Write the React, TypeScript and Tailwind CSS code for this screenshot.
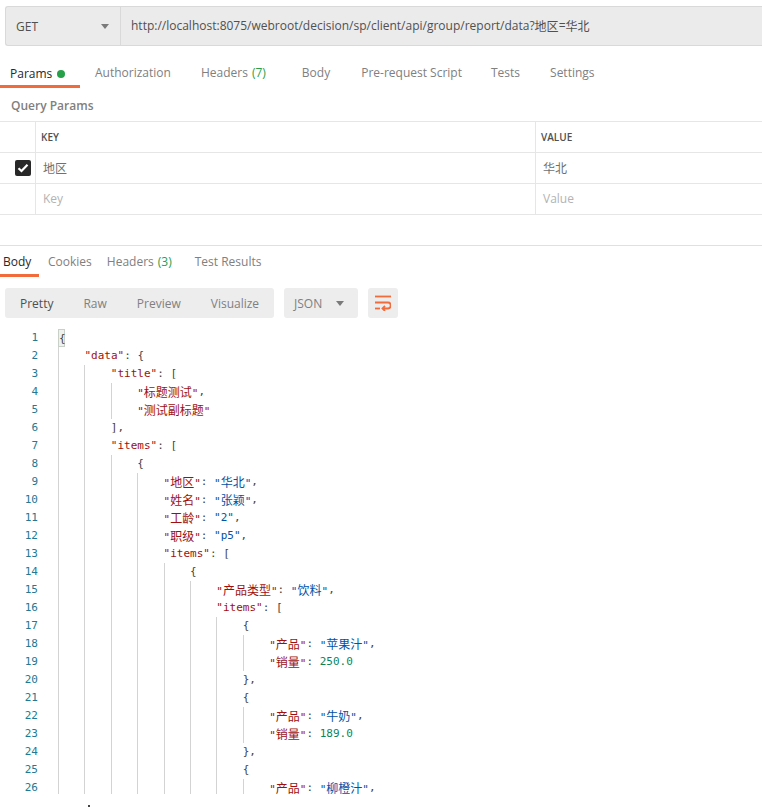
import React from "react";

type Tok = [string, "k" | "s" | "n" | "p"];
type Line = [number, Tok[]];

const k = (t: string): Tok => [t, "k"];
const s = (t: string): Tok => [t, "s"];
const n = (t: string): Tok => [t, "n"];
const p = (t: string): Tok => [t, "p"];

const lines: Line[] = [
  [0, [p("{")]],
  [1, [k('"data"'), p(": {")]],
  [2, [k('"title"'), p(": [")]],
  [3, [k('"标题测试"'), p(",")]],
  [3, [k('"测试副标题"')]],
  [2, [p("],")]],
  [2, [k('"items"'), p(": [")]],
  [3, [p("{")]],
  [4, [k('"地区"'), p(": "), s('"华北"'), p(",")]],
  [4, [k('"姓名"'), p(": "), s('"张颖"'), p(",")]],
  [4, [k('"工龄"'), p(": "), s('"2"'), p(",")]],
  [4, [k('"职级"'), p(": "), s('"p5"'), p(",")]],
  [4, [k('"items"'), p(": [")]],
  [5, [p("{")]],
  [6, [k('"产品类型"'), p(": "), s('"饮料"'), p(",")]],
  [6, [k('"items"'), p(": [")]],
  [7, [p("{")]],
  [8, [k('"产品"'), p(": "), s('"苹果汁"'), p(",")]],
  [8, [k('"销量"'), p(": "), n("250.0")]],
  [7, [p("},")]],
  [7, [p("{")]],
  [8, [k('"产品"'), p(": "), s('"牛奶"'), p(",")]],
  [8, [k('"销量"'), p(": "), n("189.0")]],
  [7, [p("},")]],
  [7, [p("{")]],
  [8, [k('"产品"'), p(": "), s('"柳橙汁"'), p(",")]],
];

const tokClass = {
  k: "text-[#a00f0f]",
  s: "text-[#0451a5]",
  n: "text-[#098658]",
  p: "text-[#444444]",
};

function Mixed({ text }: { text: string }) {
  const parts = text.split(/([\u4e00-\u9fff]+)/).filter(Boolean);
  return (
    <>
      {parts.map((part, i) =>
        /[\u4e00-\u9fff]/.test(part) ? (
          <span key={i} className="text-[12px] font-['Noto_Sans_CJK_SC',sans-serif]">
            {part}
          </span>
        ) : (
          <span key={i}>{part}</span>
        ),
      )}
    </>
  );
}

function Caret() {
  return <span className="h-0 w-0 border-x-[4px] border-t-[5px] border-x-transparent border-t-[#7a7a7a]" />;
}

function Tab({ label, extra, className }: { label: string; extra?: React.ReactNode; className?: string }) {
  return (
    <div className={`flex h-full items-center whitespace-nowrap text-[#808080] ${className ?? ""}`}>
      {label}
      {extra}
    </div>
  );
}

const cjkSans = "font-['Noto_Sans_CJK_SC',sans-serif]";

export default function App() {
  return (
    <div className="h-[808px] w-[762px] overflow-hidden bg-white font-['Open_Sans',sans-serif] text-[12px]">
      {/* URL bar */}
      <div className="pl-[5px] pt-[6px]">
        <div className="flex h-[40px] rounded-l-[3px] border-y border-l border-[#d9d9d9] bg-[#ebebeb]">
          <div className="flex w-[115px] items-center justify-between border-r border-[#d9d9d9] pl-[10px] pr-[11px] font-medium text-[#505050]">
            <span className="pt-[2px]">GET</span>
            <Caret />
          </div>
          <div className="flex items-center pl-[10px] text-[#505050]">
            http://localhost:8075/webroot/decision/sp/client/api/group/report/data?<span className={cjkSans}>地区</span>=<span className={cjkSans}>华北</span>
          </div>
        </div>
      </div>

      {/* Request tabs */}
      <div className="mt-[14px] flex h-[28px] items-stretch">
        <div className="flex w-[80px] items-center gap-[5px] border-b-[3px] border-[#f26b3a] pl-[10px] pt-[2px] text-[#282828]">
          Params
          <span className="h-2 w-2 rounded-full bg-[#26a14a]" />
        </div>
        <div className="ml-[15px] flex items-center gap-[30px] pb-[2px] text-[#808080]">
          <Tab label="Authorization" />
          <Tab label="Headers" className="mr-[6px]" extra={<span className="ml-1 text-[#26a14a]">(7)</span>} />
          <Tab label="Body" className="mr-[1px]" />
          <Tab label="Pre-request Script" className="-mr-[1px]" />
          <Tab label="Tests" />
          <Tab label="Settings" />
        </div>
      </div>

      <div className="flex h-[33px] items-center pl-[11px] pt-[2px] font-semibold text-[#808080]">Query Params</div>

      {/* Params table */}
      <div className="border-t border-[#e6e6e6]">
        <div className="flex h-[31px] border-b border-[#e6e6e6]">
          <div className="w-[36px] border-r border-[#e6e6e6]" />
          <div className="flex w-[500px] items-center border-r border-[#e6e6e6] pl-[5px] text-[10px] font-semibold text-[#505050]">KEY</div>
          <div className="flex items-center pl-[5px] text-[10px] font-semibold text-[#505050]">VALUE</div>
        </div>
        <div className="flex h-[31px] border-b border-[#e6e6e6]">
          <div className="flex w-[36px] items-center pl-[15px] border-r border-[#e6e6e6]">
            <span className="flex h-4 w-4 items-center justify-center rounded-[2px] bg-[#282828]">
              <svg width="12" height="10" viewBox="0 0 12 10">
                <path d="M1.5 5.2 L4.5 8 L10.5 1.8" fill="none" stroke="#ffffff" strokeWidth="2.2" />
              </svg>
            </span>
          </div>
          <div className={`flex w-[500px] items-center border-r border-[#e6e6e6] pl-[7px] text-[#707070] ${cjkSans}`}>地区</div>
          <div className={`flex items-center pl-[7px] text-[#707070] ${cjkSans}`}>华北</div>
        </div>
        <div className="flex h-[31px] border-b border-[#e6e6e6]">
          <div className="w-[36px] border-r border-[#e6e6e6]" />
          <div className="flex w-[500px] items-center border-r border-[#e6e6e6] pl-[7px] text-[#b3b3b3]">Key</div>
          <div className="flex items-center pl-[7px] text-[#b3b3b3]">Value</div>
        </div>
      </div>

      {/* Response */}
      <div className="mt-[30px] border-t border-[#e0e0e0]">
        <div className="flex h-[31px] items-stretch">
          <div className="flex w-[39px] items-center border-b-[3px] border-[#f26b3a] pl-[3px] pt-[4px] text-[#282828]">Body</div>
          <div className="ml-[9px] flex items-center gap-[15px] pt-[1px] text-[#808080]">
            <Tab label="Cookies" />
            <Tab label="Headers" className="mr-[8px]" extra={<span className="ml-1 text-[#26a14a]">(3)</span>} />
            <Tab label="Test Results" />
          </div>
        </div>

        <div className="mt-[11px] flex h-[30px] pl-[5px]">
          <div className="flex w-[269px] items-center rounded-[3px] bg-[#ededed] pl-[15px] pt-[2px] text-[#808080]">
            <span className="text-[#505050]">Pretty</span>
            <span className="ml-[30px]">Raw</span>
            <span className="ml-[30px]">Preview</span>
            <span className="ml-[30px]">Visualize</span>
          </div>
          <div className="ml-[10px] flex w-[74px] items-center justify-between rounded-[3px] bg-[#ededed] pl-[10px] pr-[14px] text-[#808080]">
            <span className="pt-[2px]">JSON</span>
            <Caret />
          </div>
          <div className="ml-[10px] flex w-[30px] items-center justify-center rounded-[3px] bg-[#ededed]">
            <svg width="16" height="16" viewBox="0 0 16 16" fill="none" stroke="#f26b3a" strokeWidth="1.8">
              <path d="M0 1.5 H16" />
              <path d="M0 7.5 H13 C16.6 7.5 16.6 13.5 13 13.5 H8" />
              <path d="M0 13.5 H5" />
              <path d="M10 11 L7.5 13.5 L10 16" />
            </svg>
          </div>
        </div>

        {/* Code */}
        <div className="mt-[11px] font-['DejaVu_Sans_Mono',monospace] text-[11px] leading-[18px]">
          {lines.map(([indent, toks], i) => (
            <div key={i} className="flex h-[18px] whitespace-pre">
              <div className="mr-[20px] w-[38px] shrink-0 text-right text-[#237893]">{i + 1}</div>
              {i === 0 ? (
                <span className="h-[18px] w-[7px] border border-[#c8d0c8] bg-[#eef2ee] text-[#444444]">{"{"}</span>
              ) : (
                Array.from({ length: indent }).map((_, j) => (
                  <span key={j} className={`block w-[26.4px] shrink-0 border-l border-[#d3d3d3] ${i === 25 ? "h-[15px]" : "h-[18px]"}`} />
                ))
              )}
              {i !== 0 &&
                toks.map(([text, type], j) => (
                  <span key={j} className={tokClass[type]}>
                    <Mixed text={text} />
                  </span>
                ))}
            </div>
          ))}
          <div className="ml-[88px] mt-[8px] h-[2px] w-[2px] bg-[#444444]" />
        </div>
      </div>
    </div>
  );
}
